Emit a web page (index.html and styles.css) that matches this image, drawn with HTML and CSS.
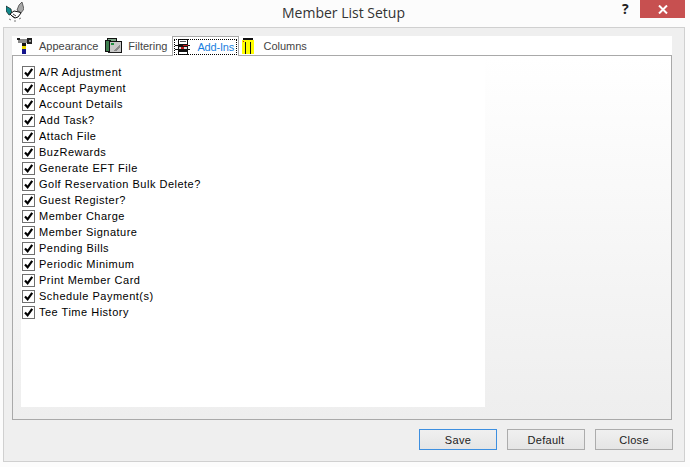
FILE: index.html

```html
<!DOCTYPE html>
<html lang="en">
<head>
  <meta charset="UTF-8" />
  <title>Member List Setup</title>
  <link rel="stylesheet" href="styles.css">
</head>
<body>
  <div class="window">
    <div class="titlebar">
      <svg class="app-icon" width="18" height="20" viewBox="0 0 18 20">
        <path d="M0 4l5 3 1 5-3 1-3-4z" fill="#12898c" stroke="#111" stroke-width=".7"/>
        <path d="M16 0l2 7-3 4-4-3 2-5z" fill="#a8a8a8" stroke="#333" stroke-width=".7"/>
        <path d="M4 12l4-3 5 1 2 1-3 4-3 1-3-2z" fill="#fff" stroke="#111" stroke-width="1"/>
        <path d="M7 12l3 2M6 14l3 2" stroke="#111" stroke-width=".8" fill="none"/>
        <path d="M3 17l2 1M8 19h2M13 17l2-1" stroke="#777" stroke-width="1" fill="none"/>
      </svg>
      <div class="title">Member List Setup</div>
      <div class="help">?</div>
      <div class="close">
        <svg width="10" height="9" viewBox="0 0 10 9"><path d="M1 .5l8 8M9 .5l-8 8" stroke="#fff" stroke-width="2" fill="none"/></svg>
      </div>
    </div>

    <div class="frame">
      <div class="tabs">
        <div class="tab tab-appearance">
          <svg class="tab-icon" width="16" height="17" viewBox="0 0 16 17" shape-rendering="crispEdges">
            <rect x="1" y="2" width="9" height="4" fill="#8a8a8a"/>
            <rect x="0" y="1" width="3" height="2" fill="#222"/>
            <rect x="10" y="1" width="5" height="6" fill="#222"/>
            <rect x="12" y="3" width="2" height="2" fill="#999"/>
            <rect x="5" y="6" width="4" height="3" fill="#111"/>
            <rect x="5" y="9" width="4" height="3" fill="#e8d800"/>
            <rect x="5" y="12" width="4" height="5" fill="#14148c"/>
          </svg>
          <span>Appearance</span>
        </div>
        <div class="tab tab-filtering">
          <svg class="tab-icon" width="17" height="16" viewBox="0 0 17 16" shape-rendering="crispEdges">
            <rect x="2.5" y=".5" width="9" height="12" fill="#7fa88a" stroke="#111"/>
            <rect x=".5" y="2.5" width="5" height="11" fill="#3f7f4f" stroke="#111"/>
            <rect x="4.5" y="3.5" width="12" height="11" fill="#c8c8c8" stroke="#111"/>
            <rect x="6" y="5" width="3" height="2" fill="#1f8f3f"/>
            <path d="M8 13l7-7v3l-4 4z" fill="#8a8a8a"/>
            <rect x="3" y="14" width="12" height="1" fill="#222"/>
          </svg>
          <span>Filtering</span>
        </div>
        <div class="tab tab-addins active">
          <div class="focus">
            <svg class="tab-icon" width="16" height="16" viewBox="0 0 16 16" shape-rendering="crispEdges">
              <rect x="3.5" y=".5" width="9" height="5" fill="#fff" stroke="#111"/>
              <rect x="5" y="2" width="6" height="1" fill="#555"/>
              <rect x="0" y="6" width="15" height="1" fill="#111"/>
              <rect x="3.5" y="7.5" width="9" height="4" fill="#ddd" stroke="#111"/>
              <rect x="0" y="10" width="15" height="1" fill="#111"/>
              <rect x="8" y="6" width="5" height="1" fill="#c01818"/>
              <rect x="6" y="8" width="3" height="2" fill="#c01818"/>
              <rect x="3.5" y="12.5" width="9" height="3" fill="#fff" stroke="#111"/>
            </svg>
            <span>Add-Ins</span>
          </div>
        </div>
        <div class="tab tab-columns">
          <svg class="tab-icon" width="12" height="16" viewBox="0 0 12 16" shape-rendering="crispEdges">
            <rect x="0" y="2" width="12" height="14" fill="#ffff00"/>
            <rect x="1" y="0" width="10" height="2" fill="#111"/>
            <rect x="3" y="4" width="1" height="12" fill="#111"/>
            <rect x="8" y="4" width="1" height="12" fill="#111"/>
            <rect x="1" y="3" width="1" height="1" fill="#e01010"/>
          </svg>
          <span>Columns</span>
        </div>
      </div>

      <div class="tab-page">
        <div class="check-list" id="list"></div>
      </div>

      <div class="buttons">
        <button class="btn btn-default">Save</button>
        <button class="btn">Default</button>
        <button class="btn">Close</button>
      </div>
    </div>
  </div>

  <script>
    const items = ["A/R Adjustment", "Accept Payment", "Account Details", "Add Task?", "Attach File",
      "BuzRewards", "Generate EFT File", "Golf Reservation Bulk Delete?", "Guest Register?", "Member Charge",
      "Member Signature", "Pending Bills", "Periodic Minimum", "Print Member Card", "Schedule Payment(s)",
      "Tee Time History"];

    const list = document.getElementById("list");
    for (let item of items) {
      const row = document.createElement("div");
      row.className = "check-row";
      row.innerHTML = `
        <span class="check"><svg width="11" height="11" viewBox="0 0 11 11"><path d="M2 5.5l2.6 2.8L9.2 1.8" stroke="#000" stroke-width="2.2" fill="none"/></svg></span>
        <span class="check-label">${item}</span>`;
      list.appendChild(row);
    }
  </script>
</body>
</html>
```

FILE: styles.css

```css
html, body {
  margin: 0;
  padding: 0;
}
body {
  width: 690px;
  height: 467px;
  overflow: hidden;
  background: #fcfcfc;
  font-family: 'Liberation Sans', Arial, sans-serif;
  font-size: 11px;
  color: #000;
}
.titlebar {
  position: relative;
  height: 27px;
  display: flex;
  justify-content: center;
}
.app-icon {
  position: absolute;
  left: 6px;
  top: 2px;
}
.title {
  font-family: 'Open Sans', sans-serif;
  font-size: 14px;
  line-height: 26px;
  color: #333;
  margin-left: -3px;
}
.help {
  position: absolute;
  left: 622px;
  top: 1px;
  font-family: 'Open Sans', sans-serif;
  font-size: 14px;
  font-weight: bold;
  line-height: 16px;
  color: #222;
}
.close {
  position: absolute;
  left: 640px;
  top: 0;
  width: 45px;
  height: 18px;
  background: #c75050;
  display: flex;
  align-items: center;
  justify-content: center;
}
.frame {
  width: 680px;
  height: 425px;
  margin-left: 3px;
  padding-top: 8px;
  background: #efefef;
  border: 1px solid #d0d0d0;
}
.tabs {
  display: flex;
  width: 660px;
  height: 19px;
  margin-left: 8px;
  background: #fff;
  color: #444;
}
.tab {
  display: flex;
  align-items: center;
}
.tab-icon {
  flex: none;
}
.tab-appearance {
  padding-left: 5px;
}
.tab-appearance span {
  margin-left: 6px;
}
.tab-filtering {
  margin-left: 7px;
}
.tab-filtering span {
  margin-left: 6px;
}
.tab-addins {
  margin-left: 5px;
}
.tab-columns {
  margin-left: 3px;
}
.tab-columns span {
  margin-left: 9px;
}
.active {
  width: 67px;
  height: 20px;
  box-sizing: border-box;
  border: 1px solid #a9a9a9;
  border-bottom: 0;
  background: #fff;
  color: #1a7fe0;
  padding: 1px;
  position: relative;
  z-index: 1;
}
.focus {
  display: flex;
  align-items: center;
  width: 100%;
  height: 16px;
  outline: 1px dotted #000;
  outline-offset: -1px;
  padding-left: 1px;
  box-sizing: border-box;
  white-space: nowrap;
}
.focus span {
  margin-left: 6px;
  letter-spacing: -.2px;
}
.tab-page {
  width: 658px;
  height: 363px;
  margin-left: 8px;
  border: 1px solid #a9a9a9;
  background: linear-gradient(#fff, #eeeeee);
}
.check-list {
  width: 464px;
  height: 343px;
  margin-left: 8px;
  padding-top: 8px;
  background: #fff;
}
.check-row {
  display: flex;
  align-items: center;
  height: 16px;
  padding-left: 1px;
}
.check {
  width: 11px;
  height: 11px;
  border: 1px solid #707070;
  background: #fff;
  display: block;
  flex: none;
}
.check svg {
  display: block;
}
.check-label {
  align-self: flex-start;
  margin-left: 4px;
  line-height: 16px;
  height: 14px;
  overflow: hidden;
  letter-spacing: .5px;
}
.buttons {
  display: flex;
  justify-content: flex-end;
  gap: 10px;
  width: 661px;
  margin: 9px 0 0 8px;
}
.btn {
  width: 78px;
  height: 21px;
  padding: 0;
  border: 1px solid #acacac;
  background: linear-gradient(#f0f0f0, #e5e5e5);
  font-family: 'Liberation Sans', Arial, sans-serif;
  font-size: 11px;
  letter-spacing: .3px;
  color: #222;
}
.btn-default {
  border-color: #3d8fe0;
}
```
